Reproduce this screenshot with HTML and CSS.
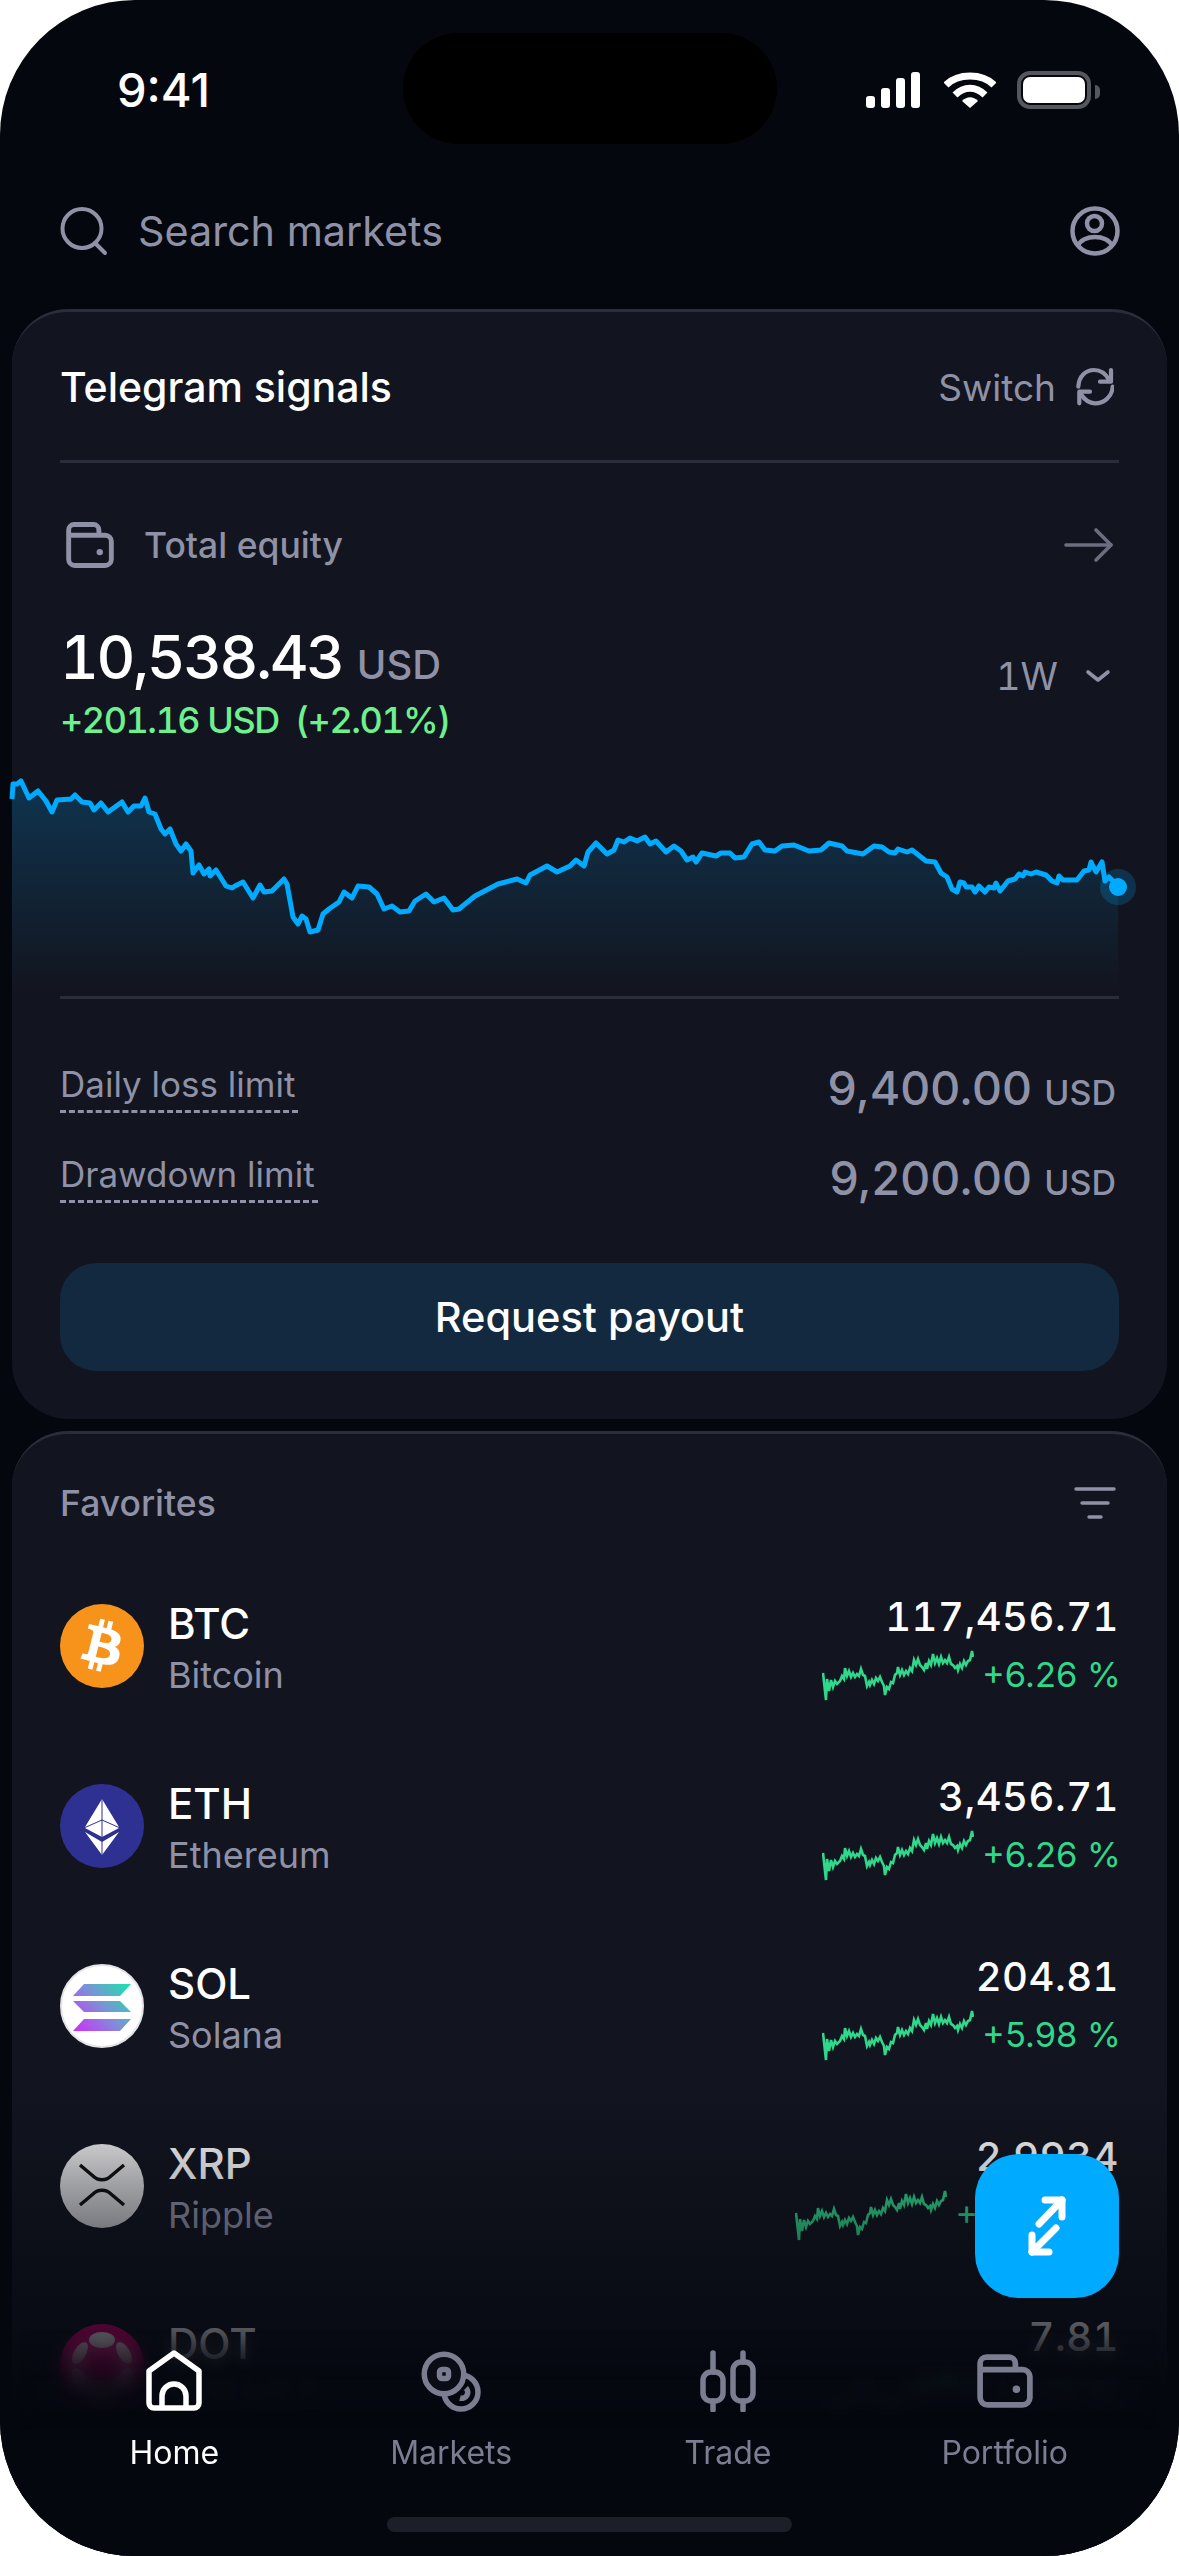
FILE: index.html
```html
<!DOCTYPE html>
<html lang="en">
<head>
    <meta charset="UTF-8">
    <meta name="viewport" content="width=device-width, initial-scale=1.0">
    <title>Home</title>
    <link rel="stylesheet" href="styles.css">
</head>
<body>
<svg class="defs" width="0" height="0">
    <defs>
        <symbol id="wallet" viewBox="0 0 54 52">
            <path d="M3 15V9a6 6 0 0 1 6-6h22a6 6 0 0 1 6 6v6M3 15v27a7 7 0 0 0 7 7h34a7 7 0 0 0 7-7V22a7 7 0 0 0-7-7H3z" fill="none" stroke="currentColor" stroke-width="5.5" stroke-linejoin="round"/>
            <circle cx="38" cy="34" r="3.6" fill="currentColor"/>
        </symbol>
        <symbol id="spark" viewBox="0 0 152 52">
            <path d="M1 24L4 51L5 30L7 42L9 31L11 38L13 32L15 35L18 32L20 27L22 30L23 19L25 27L27 22L29 28L31 24L33 28L35 25L37 27L39 20L41 26L43 27L45 37L47 33L48 36L50 31L52 35L54 29L56 32L58 28L60 33L62 37L63 46L65 38L67 40L69 33L71 34L73 26L75 24L76 18L78 26L80 21L82 26L84 22L86 25L88 19L90 22L92 11L94 16L96 10L98 16L100 18L102 21L104 14L105 20L107 12L109 16L111 5L113 14L115 9L117 15L119 8L121 14L123 11L125 14L127 8L129 15L131 16L133 19L135 17L136 21L138 15L140 19L142 12L144 16L146 12L148 11L150 2L151 8" fill="none" stroke="currentColor" stroke-width="2.6"/>
        </symbol>
        <linearGradient id="chartFill" x1="0" y1="0" x2="0" y2="1">
            <stop offset="0" stop-color="#0f3450"/>
            <stop offset="0.55" stop-color="#112334"/>
            <stop offset="1" stop-color="#12151f"/>
        </linearGradient>
        <linearGradient id="solGrad" gradientUnits="userSpaceOnUse" x1="14" y1="68" x2="70" y2="18">
            <stop offset="0" stop-color="#d02cf8"/>
            <stop offset="0.5" stop-color="#7f8fd8"/>
            <stop offset="1" stop-color="#14e8ac"/>
        </linearGradient>
        <linearGradient id="xrpGrad" x1="0" y1="0" x2="0" y2="1">
            <stop offset="0" stop-color="#f0f0f2"/>
            <stop offset="1" stop-color="#c4c4c8"/>
        </linearGradient>
    </defs>
</svg>

<div class="phone">
    <div class="status">
        <div class="time">9:41</div>
        <div class="island"></div>
        <div class="status-icons">
            <svg width="54" height="36" viewBox="0 0 54 36" fill="#fff">
                <rect x="0" y="24" width="9" height="12" rx="3"/>
                <rect x="15" y="16" width="9" height="20" rx="3"/>
                <rect x="30" y="6" width="9" height="30" rx="3"/>
                <rect x="45" y="0" width="9" height="36" rx="3"/>
            </svg>
            <svg width="52" height="36" viewBox="0 0 52 36" fill="none" stroke="#fff" stroke-width="7">
                <path d="M2 13C14 1 38 1 50 13"/>
                <path d="M11 23C20 14 32 14 41 23"/>
                <path d="M18 29L26 36L34 29C29 24 23 24 18 29Z" fill="#fff" stroke="none"/>
            </svg>
            <div class="battery"><div class="battery-fill"></div></div>
        </div>
    </div>

    <div class="search">
        <svg width="48" height="50" viewBox="0 0 48 50" fill="none" stroke="#8f91a6" stroke-width="4" stroke-linecap="round">
            <circle cx="22" cy="22.500" r="19.500"/>
            <path d="M35 37L45 47"/>
        </svg>
        <span class="search-text">Search markets</span>
        <svg class="avatar" width="50" height="50" viewBox="0 0 50 50" fill="none" stroke="#8f91a6" stroke-width="4.500">
            <circle cx="25" cy="25" r="22.500"/>
            <circle cx="24.500" cy="17.500" r="7.500"/>
            <path d="M8 40C12 28 38 28 42 40"/>
        </svg>
    </div>

    <section class="card">
        <div class="card-head">
            <span class="card-title">Telegram signals</span>
            <span class="switch">Switch
                <svg width="38" height="40" viewBox="0 0 38 40" fill="none" stroke="#8f91a6" stroke-width="4.200" stroke-linecap="round" stroke-linejoin="round">
                    <path d="M2.300 19.700C3 9 10 3 18 3C25 3 30 7 33 13"/>
                    <path d="M35 3V14.700H24"/>
                    <path d="M36.700 19.700C36 30 28 36.300 19 36.300C13 36.300 8 32 4.700 27"/>
                    <path d="M3.300 36.300V24.700H14"/>
                </svg>
            </span>
        </div>
        <div class="rule"></div>

        <div class="equity">
            <svg class="equity-icon"><use href="#wallet"/></svg>
            <span class="equity-label">Total equity</span>
            <svg class="equity-arrow" width="50" height="36" viewBox="0 0 50 36" fill="none" stroke="#6c6e80" stroke-width="3.600" stroke-linecap="round" stroke-linejoin="round">
                <path d="M2 18H47"/>
                <path d="M32 3L47 18L32 33"/>
            </svg>
        </div>

        <div class="balance-row">
            <div>
                <div class="balance"><span class="balance-num">10,538.43</span> <span class="balance-cur">USD</span></div>
                <div class="delta">+201.16 USD&nbsp; (+2.01%)</div>
            </div>
            <div class="range">1W
                <svg width="26" height="14" viewBox="0 0 26 14" fill="none" stroke="#8f91a6" stroke-width="3.600" stroke-linecap="round" stroke-linejoin="round">
                    <path d="M3 3L13 11L23 3"/>
                </svg>
            </div>
        </div>

        <svg class="chart" width="1136" height="217" viewBox="12 780 1136 217">
            <path fill="url(#chartFill)" d="M12 800L13 785L17 785L21 782L29 799L38 792L46 802L52 813L57 801L71 800L75 796L82 803L90 804L94 811L101 804L108 813L122 803L128 813L134 807L141 807L145 799L149 813L155 815L161 830L165 835L170 830L176 845L181 852L186 845L191 852L193 874L199 866L204 875L209 870L210 877L216 871L226 887L232 889L235 887L243 883L253 899L260 886L264 893L272 892L284 880L287 885L293 918L298 925L302 917L306 920L310 933L318 931L323 915L329 910L339 903L344 893L352 899L358 887L369 888L377 895L384 910L392 907L400 913L409 912L415 902L426 895L434 903L444 899L453 911L459 910L475 897L498 885L517 880L526 884L530 876L547 867L557 873L570 867L576 861L584 867L588 853L596 844L607 855L614 851L618 841L624 843L630 839L637 842L645 838L650 845L656 842L666 853L674 847L681 852L687 861L693 858L696 863L702 854L716 857L721 854L730 854L735 859L744 858L752 845L759 843L765 851L775 852L782 847L794 846L809 852L821 851L829 844L842 847L847 852L863 855L874 847L882 848L889 853L895 854L898 850L907 853L912 851L926 862L935 863L941 874L947 878L952 890L957 893L960 883L964 884L966 888L972 888L975 893L979 887L985 893L989 888L994 889L996 884L1000 892L1008 882L1015 880L1019 875L1023 877L1025 873L1031 875L1036 873L1046 876L1052 882L1057 884L1059 877L1063 881L1077 881L1084 872L1089 871L1091 863L1096 873L1102 863L1105 882L1109 878L1118 887V992H12Z"/>
            <path fill="none" stroke="#00aaff" stroke-width="5" stroke-linejoin="round" d="M12 800L13 785L17 785L21 782L29 799L38 792L46 802L52 813L57 801L71 800L75 796L82 803L90 804L94 811L101 804L108 813L122 803L128 813L134 807L141 807L145 799L149 813L155 815L161 830L165 835L170 830L176 845L181 852L186 845L191 852L193 874L199 866L204 875L209 870L210 877L216 871L226 887L232 889L235 887L243 883L253 899L260 886L264 893L272 892L284 880L287 885L293 918L298 925L302 917L306 920L310 933L318 931L323 915L329 910L339 903L344 893L352 899L358 887L369 888L377 895L384 910L392 907L400 913L409 912L415 902L426 895L434 903L444 899L453 911L459 910L475 897L498 885L517 880L526 884L530 876L547 867L557 873L570 867L576 861L584 867L588 853L596 844L607 855L614 851L618 841L624 843L630 839L637 842L645 838L650 845L656 842L666 853L674 847L681 852L687 861L693 858L696 863L702 854L716 857L721 854L730 854L735 859L744 858L752 845L759 843L765 851L775 852L782 847L794 846L809 852L821 851L829 844L842 847L847 852L863 855L874 847L882 848L889 853L895 854L898 850L907 853L912 851L926 862L935 863L941 874L947 878L952 890L957 893L960 883L964 884L966 888L972 888L975 893L979 887L985 893L989 888L994 889L996 884L1000 892L1008 882L1015 880L1019 875L1023 877L1025 873L1031 875L1036 873L1046 876L1052 882L1057 884L1059 877L1063 881L1077 881L1084 872L1089 871L1091 863L1096 873L1102 863L1105 882L1109 878L1118 887"/>
            <circle cx="1118" cy="888" r="18" fill="#00aaff" opacity="0.2"/>
            <circle cx="1118" cy="888" r="9" fill="#00aaff"/>
        </svg>
        <div class="rule"></div>

        <div class="limits">
            <div class="limit">
                <span class="limit-label">Daily loss limit</span>
                <span class="limit-value">9,400.00 <small>USD</small></span>
            </div>
            <div class="limit">
                <span class="limit-label">Drawdown limit</span>
                <span class="limit-value">9,200.00 <small>USD</small></span>
            </div>
        </div>
        <button class="payout">Request payout</button>
    </section>

    <section class="card card-list">
        <div class="list-head">
            <span class="list-title">Favorites</span>
            <svg width="44" height="34" viewBox="0 0 44 34" fill="none" stroke="#8f91a6" stroke-width="3.400" stroke-linecap="round">
                <path d="M4 3H42"/>
                <path d="M10 17H36"/>
                <path d="M17 31H29"/>
            </svg>
        </div>

        <div class="coin">
            <svg class="coin-logo" viewBox="0 0 64 64">
                <circle cx="32" cy="32" r="32" fill="#f7931a"/>
                <path fill="#fff" d="M46.11 27.441c.636-4.258-2.606-6.547-7.039-8.074l1.438-5.768-3.512-.875-1.4 5.616c-.922-.23-1.87-.447-2.812-.662l1.41-5.653-3.509-.875-1.439 5.766c-.764-.174-1.514-.346-2.242-.527l.004-.018-4.842-1.209-.934 3.75s2.605.597 2.55.634c1.422.355 1.68 1.296 1.636 2.042l-1.638 6.571c.098.025.225.061.365.117l-.37-.092-2.297 9.205c-.174.432-.615 1.08-1.609.834.035.051-2.552-.637-2.552-.637l-1.743 4.02 4.57 1.139c.85.213 1.683.436 2.502.646l-1.453 5.835 3.507.875 1.44-5.772c.957.26 1.887.5 2.797.726L27.504 50.8l3.511.875 1.453-5.823c5.987 1.133 10.49.676 12.383-4.738 1.527-4.36-.075-6.875-3.225-8.516 2.294-.531 4.022-2.04 4.483-5.157zM38.087 38.69c-1.086 4.36-8.426 2.004-10.807 1.412l1.928-7.729c2.38.594 10.011 1.77 8.88 6.317zm1.085-11.312c-.99 3.966-7.1 1.951-9.083 1.457l1.748-7.01c1.983.494 8.367 1.416 7.335 5.553z"/>
            </svg>
            <div class="coin-name"><div class="ticker">BTC</div><div class="full">Bitcoin</div></div>
            <div class="coin-right">
                <div class="price">117,456.71</div>
                <div class="change"><svg class="spark"><use href="#spark"/></svg><span>+6.26 %</span></div>
            </div>
        </div>

        <div class="coin">
            <svg class="coin-logo" viewBox="0 0 84 84">
                <circle cx="42" cy="42" r="42" fill="#2f3192"/>
                <path fill="#fff" d="M42 15L25 43L42 35.500L59 43Z"/>
                <path fill="#fff" d="M25 44L42 36.500L59 44L42 53Z"/>
                <path fill="#fff" d="M25 48L42 58L59 48L42 71Z"/>
                <path stroke="#2f3192" stroke-width="1" d="M42 15V71"/>
            </svg>
            <div class="coin-name"><div class="ticker">ETH</div><div class="full">Ethereum</div></div>
            <div class="coin-right">
                <div class="price">3,456.71</div>
                <div class="change"><svg class="spark"><use href="#spark"/></svg><span>+6.26 %</span></div>
            </div>
        </div>

        <div class="coin">
            <svg class="coin-logo" viewBox="0 0 84 84">
                <circle cx="42" cy="42" r="41" fill="#fff" stroke="#e4e4e8" stroke-width="2"/>
                <path fill="url(#solGrad)" d="M24 20H71L60 32H13Z"/>
                <path fill="url(#solGrad)" d="M13 37H60L71 48H24Z"/>
                <path fill="url(#solGrad)" d="M24 55H71L60 67H13Z"/>
            </svg>
            <div class="coin-name"><div class="ticker">SOL</div><div class="full">Solana</div></div>
            <div class="coin-right">
                <div class="price">204.81</div>
                <div class="change"><svg class="spark"><use href="#spark"/></svg><span>+5.98 %</span></div>
            </div>
        </div>

        <div class="coin">
            <svg class="coin-logo" viewBox="0 0 84 84">
                <circle cx="42" cy="42" r="42" fill="url(#xrpGrad)"/>
                <path fill="none" stroke="#111" stroke-width="3.400" d="M20 21L33 32C38 37 46 37 51 32L64 21"/>
                <path fill="none" stroke="#111" stroke-width="3.400" d="M20 61L33 50C38 45 46 45 51 50L64 61"/>
            </svg>
            <div class="coin-name"><div class="ticker">XRP</div><div class="full">Ripple</div></div>
            <div class="coin-right">
                <div class="price">2.9934</div>
                <div class="change"><svg class="spark"><use href="#spark"/></svg><span>+140.12 %</span></div>
            </div>
        </div>

        <div class="coin">
            <svg class="coin-logo" viewBox="0 0 84 84">
                <circle cx="42" cy="42" r="42" fill="#e6007a"/>
                <g fill="#fff">
                    <ellipse cx="42" cy="16" rx="13" ry="8"/>
                    <ellipse cx="42" cy="68" rx="13" ry="8"/>
                    <ellipse cx="20" cy="29" rx="6" ry="12" transform="rotate(30 20 29)"/>
                    <ellipse cx="64" cy="29" rx="6" ry="12" transform="rotate(-30 64 29)"/>
                    <ellipse cx="20" cy="55" rx="6" ry="12" transform="rotate(-30 20 55)"/>
                    <ellipse cx="64" cy="55" rx="6" ry="12" transform="rotate(30 64 55)"/>
                </g>
            </svg>
            <div class="coin-name"><div class="ticker">DOT</div><div class="full">Polkadot</div></div>
            <div class="coin-right">
                <div class="price">7.81</div>
                <div class="change"><svg class="spark"><use href="#spark"/></svg><span>+4.12 %</span></div>
            </div>
        </div>
    </section>

    <div class="fade"></div>
    <div class="blur"></div>

    <button class="fab">
        <svg width="64" height="72" viewBox="0 0 64 72" fill="none" stroke="#fff" stroke-width="7" stroke-linecap="round" stroke-linejoin="round">
            <path d="M24 34L47 10"/>
            <path d="M30 10H47V27"/>
            <path d="M41 38L17 62"/>
            <path d="M17 45V62H34"/>
        </svg>
    </button>

    <nav class="tabbar">
        <div class="tab tab-active">
            <svg width="56" height="62" viewBox="0 0 56 62" fill="none" stroke="currentColor" stroke-width="5.500" stroke-linejoin="round">
                <path d="M28 3L53 21V53a5 5 0 0 1-5 5H8a5 5 0 0 1-5-5V21Z"/>
                <path d="M16 58V46a12 12 0 0 1 24 0V58"/>
            </svg>
            <span>Home</span>
        </div>
        <div class="tab">
            <svg width="62" height="62" viewBox="0 0 62 62" fill="none" stroke="currentColor" stroke-width="5.500">
                <circle cx="41" cy="42" r="17"/>
                <path d="M46 38a6 6 0 0 1-6 10"/>
                <circle cx="24" cy="24" r="19.750" fill="#0a0d16"/>
                <rect x="19.500" y="19.500" width="9" height="9" rx="2.500"/>
            </svg>
            <span>Markets</span>
        </div>
        <div class="tab">
            <svg width="56" height="62" viewBox="2 0 56 62" fill="none" stroke="currentColor" stroke-width="5.500" stroke-linecap="round">
                <path d="M15 3V22M15 51V60M45 3V12M45 51V60"/>
                <rect x="5" y="22" width="20" height="29" rx="8"/>
                <rect x="35" y="12" width="20" height="39" rx="8"/>
            </svg>
            <span>Trade</span>
        </div>
        <div class="tab">
            <svg class="tab-wallet"><use href="#wallet"/></svg>
            <span>Portfolio</span>
        </div>
    </nav>
    <div class="home-indicator"></div>
</div>
</body>
</html>
```

FILE: styles.css
```css
:root {
    --bg: #05070f;
    --card: #12151f;
    --line: #2b2d3a;
    --muted: #8f91a6;
    --dim: #7b7d90;
    --green: #6ff08e;
    --teal: #2fd88a;
    --blue: #00aaff;
}

* {
    box-sizing: border-box;
}

body {
    margin: 0;
    background: #fff;
    font-family: Inter, "Noto Sans", sans-serif;
    color: #fff;
}

.defs {
    position: absolute;
}

.phone {
    position: relative;
    width: 1179px;
    height: 2556px;
    border-radius: 135px;
    background: var(--bg);
    overflow: hidden;
    display: flex;
    flex-direction: column;
}

/* status bar */
.status {
    display: grid;
    grid-template-columns: 1fr 374px 1fr;
    align-items: center;
    height: 111px;
    margin-top: 33px;
}

.time {
    padding-left: 117px;
    font-size: 47px;
    font-weight: 500;
    padding-top: 2px;
}

.island {
    height: 111px;
    border-radius: 56px;
    background: #000;
}

.status-icons {
    display: flex;
    align-items: center;
    justify-content: flex-end;
    gap: 24px;
    padding-right: 88px;
    padding-top: 2px;
}

.battery {
    position: relative;
    width: 74px;
    height: 38px;
    margin-left: -3px;
    padding: 2px;
    border: 4px solid #55565e;
    border-radius: 13px;
}

.battery::after {
    content: "";
    position: absolute;
    right: -13px;
    top: 10px;
    width: 5px;
    height: 14px;
    border-radius: 0 5px 5px 0;
    background: #55565e;
}

.battery-fill {
    height: 100%;
    border-radius: 7px;
    background: #fff;
}

/* search */
.search {
    display: flex;
    align-items: center;
    gap: 30px;
    height: 50px;
    margin: 62px 59px 53px 60px;
}

.search-text {
    font-size: 41.300px;
    color: var(--muted);
}

.avatar {
    margin-left: auto;
}

/* cards */
.card {
    margin: 0 12px;
    padding: 0 48px 48px;
    border-top: 3px solid var(--line);
    border-radius: 56px;
    background: var(--card);
}

.card-head {
    display: flex;
    align-items: center;
    justify-content: space-between;
    height: 148px;
    padding: 2px 5px 0 0;
}

.card-title {
    font-size: 41px;
    font-weight: 500;
}

.switch {
    display: flex;
    align-items: center;
    gap: 20px;
    font-size: 37px;
    color: var(--muted);
}

.rule {
    height: 3px;
    background: var(--line);
}

.equity {
    display: flex;
    align-items: center;
    height: 48px;
    margin-top: 58px;
    padding-right: 5px;
}

.equity-icon {
    width: 48px;
    height: 48px;
    margin-left: 6px;
    color: var(--muted);
}

.equity-label {
    margin-left: 30px;
    font-size: 35.500px;
    font-weight: 500;
    color: var(--muted);
}

.equity-arrow {
    margin-left: auto;
}

.balance-row {
    display: flex;
    justify-content: space-between;
    margin-top: 52px;
}

.balance {
    display: flex;
    align-items: baseline;
    gap: 14px;
    height: 77px;
}

.balance-num {
    font-size: 60px;
    font-weight: 500;
    letter-spacing: -2.400px;
    font-feature-settings: "tnum";
}

.balance-cur {
    font-size: 40px;
    font-weight: 500;
    color: var(--muted);
}

.delta {
    font-size: 36px;
    font-weight: 500;
    letter-spacing: -1.500px;
    color: var(--green);
    font-feature-settings: "tnum";
}

.range {
    display: flex;
    align-items: center;
    gap: 27px;
    height: 74px;
    margin-top: 18px;
    padding-right: 8px;
    font-size: 38px;
    color: var(--muted);
    font-feature-settings: "tnum";
}

.chart {
    display: block;
    margin: 37px 0 0 -48px;
    overflow: visible;
}

.limits {
    margin-top: 44px;
}

.limit {
    display: flex;
    align-items: center;
    justify-content: space-between;
    height: 90px;
}

.limit-label {
    padding: 0 3px 5px 0;
    border-bottom: 3px dashed var(--muted);
    font-size: 35px;
    color: var(--muted);
}

.limit-value {
    padding-right: 3px;
    font-size: 46.500px;
    font-weight: 500;
    color: var(--muted);
}

.limit-value small {
    font-size: 34px;
    font-weight: 500;
}

.payout {
    display: block;
    width: 100%;
    height: 108px;
    margin-top: 40px;
    border: none;
    border-radius: 36px;
    background: #12293f;
    color: #fff;
    font-family: inherit;
    font-size: 41.500px;
    font-weight: 500;
}

/* favorites */
.card-list {
    flex: 1;
    min-height: 0;
    margin-top: 12px;
    padding-bottom: 0;
}

.list-head {
    display: flex;
    align-items: center;
    justify-content: space-between;
    height: 122px;
    padding: 16px 3px 0 0;
}

.list-title {
    font-size: 35.500px;
    font-weight: 500;
    color: var(--muted);
}

.coin {
    display: flex;
    align-items: center;
    height: 180px;
}

.coin-logo {
    flex: none;
    width: 84px;
    height: 84px;
}

.coin-name {
    margin-left: 24px;
    padding-top: 6px;
}

.ticker {
    font-size: 42px;
    font-weight: 500;
    line-height: 52px;
}

.full {
    font-size: 36px;
    line-height: 50px;
    color: var(--muted);
}

.coin-right {
    margin-left: auto;
    text-align: right;
}

.price {
    font-size: 40px;
    font-weight: 500;
    line-height: 52px;
    letter-spacing: 0.500px;
    font-feature-settings: "tnum";
}

.change {
    display: flex;
    align-items: center;
    justify-content: flex-end;
    gap: 8px;
    margin-top: 6px;
    margin-right: -2px;
    font-size: 34.500px;
    line-height: 52px;
    color: var(--teal);
}

.spark {
    width: 152px;
    height: 52px;
    color: var(--teal);
}

/* bottom overlay */
.fade {
    position: absolute;
    left: 0;
    right: 0;
    top: 2080px;
    bottom: 0;
    background: linear-gradient(to bottom,
        rgba(5, 7, 15, 0) 0,
        rgba(5, 7, 15, 0.37) 140px,
        rgba(5, 7, 15, 0.72) 260px,
        rgba(5, 7, 15, 0.97) 310px,
        rgba(5, 7, 15, 1) 350px);
}

.blur {
    position: absolute;
    left: 20px;
    right: 20px;
    top: 2330px;
    height: 100px;
    backdrop-filter: blur(7px);
    -webkit-mask-image: linear-gradient(to bottom, transparent 0, #000 50px, #000 80px, transparent 100%);
    mask-image: linear-gradient(to bottom, transparent 0, #000 50px, #000 80px, transparent 100%);
}

.fab {
    position: absolute;
    right: 60px;
    top: 2154px;
    display: flex;
    align-items: center;
    justify-content: center;
    width: 144px;
    height: 144px;
    border: none;
    border-radius: 44px;
    background: var(--blue);
}

.tabbar {
    position: absolute;
    left: 36px;
    right: 36px;
    top: 2350px;
    display: grid;
    grid-template-columns: repeat(4, 1fr);
}

.tab {
    display: flex;
    flex-direction: column;
    align-items: center;
    height: 120px;
    color: var(--dim);
}

.tab svg {
    flex: none;
    height: 62px;
}

.tab span {
    margin-top: 21px;
    font-size: 32px;
    line-height: 40px;
}

.tab-active {
    color: #fff;
}

.tab-wallet {
    width: 56px;
}

.home-indicator {
    position: absolute;
    left: 387px;
    top: 2517px;
    width: 405px;
    height: 15px;
    border-radius: 8px;
    background: #1c1f28;
}
```
